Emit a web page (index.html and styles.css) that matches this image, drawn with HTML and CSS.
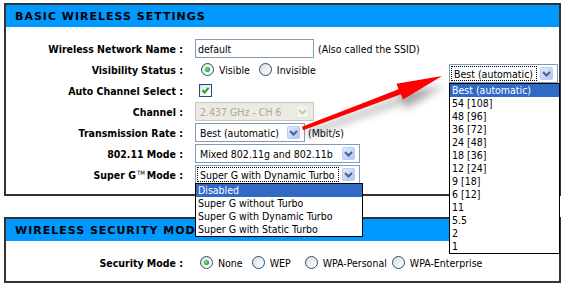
FILE: index.html
```html
<!DOCTYPE html>
<html>
<head>
<meta charset="utf-8">
<link rel="stylesheet" href="styles.css">
</head>
<body>
<div class="panel">
  <div class="head">BASIC WIRELESS SETTINGS</div>
  <div class="body">
    <div class="row">
      <div class="lbl">Wireless Network Name :</div>
      <div class="val"><span class="input w-name">default</span><span class="note">(Also called the SSID)</span></div>
    </div>
    <div class="row">
      <div class="lbl">Visibility Status :</div>
      <div class="val"><span class="radio on vis1"></span><span class="rtxt">Visible</span><span class="radio vis2"></span><span class="rtxt">Invisible</span></div>
    </div>
    <div class="row">
      <div class="lbl">Auto Channel Select :</div>
      <div class="val"><span class="check"><svg width="11" height="11" viewBox="0 0 11 11"><path d="M2.5 5.2 L4.6 7.4 L8.6 2.8" fill="none" stroke="#21a121" stroke-width="2"/></svg></span></div>
    </div>
    <div class="row">
      <div class="lbl">Channel :</div>
      <div class="val"><span class="select disabled w-ch"><span class="stext">2.437 GHz - CH 6</span><span class="sbtn"><svg width="9" height="6" viewBox="0 0 9 6"><path d="M1 1 L4.5 4.5 L8 1" fill="none" stroke="#c9c7ba" stroke-width="2"/></svg></span></span></div>
    </div>
    <div class="row">
      <div class="lbl">Transmission Rate :</div>
      <div class="val"><span class="select w-rate"><span class="stext">Best (automatic)</span><span class="sbtn"><svg width="9" height="6" viewBox="0 0 9 6"><path d="M1 1 L4.5 4.5 L8 1" fill="none" stroke="#4d6185" stroke-width="2"/></svg></span></span><span class="note mbit">(Mbit/s)</span></div>
    </div>
    <div class="row">
      <div class="lbl">802.11 Mode :</div>
      <div class="val"><span class="select w-mode"><span class="stext">Mixed 802.11g and 802.11b</span><span class="sbtn"><svg width="9" height="6" viewBox="0 0 9 6"><path d="M1 1 L4.5 4.5 L8 1" fill="none" stroke="#4d6185" stroke-width="2"/></svg></span></span></div>
    </div>
    <div class="row">
      <div class="lbl">Super G<span class="tm">TM</span>Mode :</div>
      <div class="val"><span class="select w-mode"><span class="stext focus">Super G with Dynamic Turbo</span><span class="sbtn"><svg width="9" height="6" viewBox="0 0 9 6"><path d="M1 1 L4.5 4.5 L8 1" fill="none" stroke="#4d6185" stroke-width="2"/></svg></span></span></div>
    </div>
  </div>
</div>

<div class="panel p2">
  <div class="head">WIRELESS SECURITY MODE</div>
  <div class="body">
    <div class="row">
      <div class="lbl">Security Mode :</div>
      <div class="val"><span class="radio on s1"></span><span class="rtxt">None</span><span class="radio s2"></span><span class="rtxt">WEP</span><span class="radio s3"></span><span class="rtxt">WPA-Personal</span><span class="radio s4"></span><span class="rtxt">WPA-Enterprise</span></div>
    </div>
  </div>
</div>

<svg class="arrow" width="566" height="288" viewBox="0 0 566 288">
  <defs>
    <filter id="blur" x="-20%" y="-50%" width="140%" height="200%"><feGaussianBlur stdDeviation="4"/></filter>
  </defs>
  <polygon points="306,132 400,98 398,92 444,86 406,108 403,102 307,136" fill="#555" opacity="0.55" filter="url(#blur)"/>
  <polygon points="302,126.8 398.6,89.2 396.5,83.8 442,76 403,99.5 400.9,94.2 303.2,130.2" fill="#f00"/>
</svg>

<div class="select float-rate"><span class="stext focus">Best (automatic)</span><span class="sbtn"><svg width="9" height="6" viewBox="0 0 9 6"><path d="M1 1 L4.5 4.5 L8 1" fill="none" stroke="#4d6185" stroke-width="2"/></svg></span></div>

<div class="list list-rate">
  <div class="item sel">Best (automatic)</div>
  <div class="item">54 [108]</div>
  <div class="item">48 [96]</div>
  <div class="item">36 [72]</div>
  <div class="item">24 [48]</div>
  <div class="item">18 [36]</div>
  <div class="item">12 [24]</div>
  <div class="item">9 [18]</div>
  <div class="item">6 [12]</div>
  <div class="item">11</div>
  <div class="item">5.5</div>
  <div class="item">2</div>
  <div class="item">1</div>
</div>

<div class="list list-superg">
  <div class="item sel">Disabled</div>
  <div class="item">Super G without Turbo</div>
  <div class="item">Super G with Dynamic Turbo</div>
  <div class="item">Super G with Static Turbo</div>
</div>
</body>
</html>
```
FILE: styles.css
```css
html, body {
  margin: 0;
  padding: 0;
  background: #fff;
}
body {
  position: relative;
  width: 566px;
  height: 288px;
  overflow: hidden;
  padding-top: 3px;
  box-sizing: border-box;
  font-family: "DejaVu Sans Condensed", "DejaVu Sans", sans-serif;
  font-size: 10.5px;
  color: #000;
  white-space: nowrap;
}
.panel {
  margin-left: 4px;
  width: 557px;
  box-sizing: border-box;
  border: 2px solid #333;
}
.p2 {
  margin-top: 21px;
}
.head {
  height: 22px;
  background: #0099ff;
  display: flex;
  align-items: center;
  padding-left: 9px;
  font-family: "DejaVu Sans", sans-serif;
  font-weight: bold;
  font-size: 11px;
  letter-spacing: 1px;
  overflow: hidden;
}
.body {
  padding: 11px 0 9px 0;
}
.p2 .body {
  padding: 11px 0 8px 0;
}
.row {
  display: flex;
  align-items: center;
  height: 21px;
}
.lbl {
  width: 177px;
  margin-right: 12px;
  text-align: right;
  font-weight: bold;
}
.tm {
  font-size: 6px;
  vertical-align: 4px;
  font-weight: normal;
  margin: 0 2px 0 1px;
}
.val {
  display: flex;
  align-items: center;
}
.input {
  display: flex;
  align-items: center;
  height: 19px;
  box-sizing: border-box;
  border: 1px solid #7f9db9;
  padding-left: 2px;
}
.w-name { width: 119px; }
.note { margin-left: 4px; }
.mbit { margin-left: 3px; }

.radio {
  width: 13px;
  height: 13px;
  box-sizing: border-box;
  border-radius: 50%;
  border: 1px solid #1c5180;
  background: linear-gradient(135deg, #dcdcd5 0%, #f4f4f0 60%, #fff 100%);
  display: flex;
  align-items: center;
  justify-content: center;
  flex: none;
}
.radio.on::after {
  content: "";
  width: 5px;
  height: 5px;
  border-radius: 50%;
  background: radial-gradient(circle at 40% 40%, #7be27b, #21a121 70%);
}
.rtxt { margin-left: 5px; }
.vis1 { margin-left: 6px; }
.vis2 { margin-left: 9px; }
.s1 { margin-left: 5px; }
.s2 { margin-left: 9px; }
.s3 { margin-left: 14px; }
.s4 { margin-left: 5px; }

.check {
  margin-left: 4px;
  width: 13px;
  height: 13px;
  box-sizing: border-box;
  border: 1px solid #1c5180;
  background: linear-gradient(135deg, #dcdcd5 0%, #f8f8f4 60%, #fff 100%);
  display: flex;
  align-items: center;
  justify-content: center;
}
.check svg { display: block; }

.select {
  display: flex;
  align-items: center;
  height: 19px;
  box-sizing: border-box;
  border: 1px solid #7f9db9;
  background: #fff;
  padding-left: 1px;
}
.select .stext {
  flex: 1;
  min-width: 0;
  padding-left: 2px;
  height: 15px;
  line-height: 14px;
  box-sizing: border-box;
  border: 1px solid transparent;
  overflow: hidden;
}
.select .stext.focus {
  border: 1px dotted #000;
}
.sbtn {
  width: 13px;
  height: 13px;
  margin: 0 4px 0 3px;
  flex: none;
  box-sizing: border-box;
  border: 1px solid #b7cbf7;
  border-radius: 2px;
  background: linear-gradient(135deg, #e6eefc 0%, #c1d3fb 60%, #b4c8f6 100%);
  display: flex;
  align-items: center;
  justify-content: center;
}
.sbtn svg { display: block; }
.select.disabled {
  border-color: #c9c7ba;
  background: #ebebe4;
  color: #aca899;
}
.select.disabled .sbtn {
  border-color: #e8e6dc;
  background: #f4f3ee;
}
.w-ch { width: 119px; }
.w-rate { width: 110px; }
.w-mode { width: 165px; }

.arrow {
  position: absolute;
  left: 0;
  top: 0;
  pointer-events: none;
}
.float-rate {
  position: absolute;
  left: 449px;
  top: 64px;
  width: 109px;
}
.list {
  position: absolute;
  background: #fff;
  border: 1px solid #000;
  box-sizing: border-box;
}
.list-rate {
  left: 449px;
  top: 83px;
  width: 111px;
}
.list-superg {
  left: 195px;
  top: 183px;
  width: 168px;
}
.item {
  height: 13px;
  line-height: 13px;
  padding-left: 2px;
}
.item.sel {
  background: #316ac5;
  color: #fff;
}
```
